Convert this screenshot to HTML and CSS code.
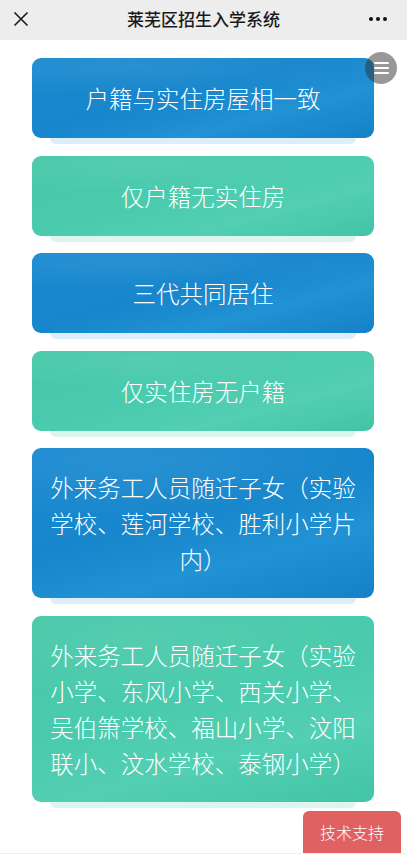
FILE: index.html
```html
<!DOCTYPE html>
<html lang="zh-CN">
<head>
  <meta charset="UTF-8">
  <meta name="viewport" content="width=device-width, initial-scale=1.0">
  <title>莱芜区招生入学系统</title>
  <link rel="stylesheet" href="styles.css">
</head>
<body>
  <div class="top-bar">
    <svg class="close-icon" width="16" height="16" viewBox="0 0 16 16">
      <path d="M1.5 1.5 L14.5 14.5 M14.5 1.5 L1.5 14.5" stroke="#1a1a1a" stroke-width="1.6" fill="none"/>
    </svg>
    <div class="top-title">莱芜区招生入学系统</div>
    <div class="more-dots"><span></span><span></span><span></span></div>
  </div>

  <div class="page">
    <div class="menu-btn"><span></span><span></span><span></span></div>

    <div class="card blue">户籍与实住房屋相一致</div>
    <div class="card green">仅户籍无实住房</div>
    <div class="card blue">三代共同居住</div>
    <div class="card green">仅实住房无户籍</div>
    <div class="card blue">外来务工人员随迁子女（实验学校、莲河学校、胜利小学片内）</div>
    <div class="card green">外来务工人员随迁子女（实验小学、东风小学、西关小学、吴伯箫学校、福山小学、汶阳联小、汶水学校、泰钢小学）</div>

    <div class="support-row">
      <div class="support-btn">技术支持</div>
    </div>
  </div>
  <div class="bottom-strip"></div>
</body>
</html>
```

FILE: styles.css
```css
body {
  margin: 0;
  padding: 0;
  font-family: "Noto Sans CJK SC", "Noto Sans", sans-serif;
  background-color: #fff;
  width: 407px;
  height: 854px;
  overflow: hidden;
  display: flex;
  flex-direction: column;
}

.top-bar {
  height: 40px;
  background-color: #ededed;
  display: flex;
  align-items: center;
  justify-content: space-between;
  padding: 0 20px 0 13px;
  flex-shrink: 0;
  position: relative;
}

.close-icon {
  margin-top: -3px;
}

.top-title {
  position: absolute;
  left: 0;
  right: 0;
  top: 0;
  line-height: 37px;
  text-align: center;
  font-size: 17px;
  font-weight: 500;
  color: #1a1a1a;
}

.more-dots {
  display: flex;
  gap: 3px;
  margin-top: -3px;
}

.more-dots span {
  width: 4px;
  height: 4px;
  border-radius: 50%;
  background-color: #111;
}

.page {
  flex: 1;
  position: relative;
  padding: 18px 33px 0 32px;
  display: flex;
  flex-direction: column;
  gap: 17.6px;
}

.menu-btn {
  position: absolute;
  top: 12px;
  left: 365px;
  width: 32px;
  height: 32px;
  border-radius: 50%;
  background-color: rgba(50, 50, 50, 0.5);
  z-index: 5;
  display: flex;
  flex-direction: column;
  align-items: center;
  justify-content: center;
  gap: 3px;
}

.menu-btn span {
  width: 15px;
  height: 2px;
  border-radius: 1px;
  background-color: #fff;
}

.card {
  position: relative;
  min-height: 80px;
  box-sizing: border-box;
  padding: 21px 12px;
  border-radius: 9px;
  display: flex;
  align-items: center;
  justify-content: center;
  text-align: center;
  color: #fff;
  font-size: 23.5px;
  font-weight: 300;
  line-height: 36px;
}

.card::after {
  content: "";
  position: absolute;
  left: 18px;
  right: 18px;
  bottom: -6px;
  height: 14px;
  border-radius: 0 0 6px 6px;
  z-index: -1;
}

.blue {
  background-color: #1786cc;
  background-image:
    radial-gradient(ellipse 120% 60% at 30% 10%, rgba(255, 255, 255, 0.07), transparent 60%),
    linear-gradient(165deg, #1a8ad0 0%, #1786cc 45%, #2192d3 70%, #1581c8 100%);
}

.blue::after {
  background-color: #dbeef9;
}

.green {
  background-color: #48c9ab;
  background-image:
    radial-gradient(ellipse 120% 60% at 30% 10%, rgba(255, 255, 255, 0.07), transparent 60%),
    linear-gradient(165deg, #46c7a9 0%, #4acbad 45%, #53cfb3 70%, #42c4a6 100%);
}

.green::after {
  background-color: #dcf6ee;
}

.support-row {
  display: flex;
  justify-content: flex-end;
  margin-right: -27px;
  margin-top: -9px;
}

.support-btn {
  width: 98px;
  height: 42px;
  border-radius: 6px 6px 0 0;
  background-color: #e06162;
  color: #fff;
  font-size: 16px;
  font-weight: 300;
  line-height: 42px;
  text-align: center;
}

.bottom-strip {
  height: 3px;
  background-color: #efefef;
  flex-shrink: 0;
}
```
